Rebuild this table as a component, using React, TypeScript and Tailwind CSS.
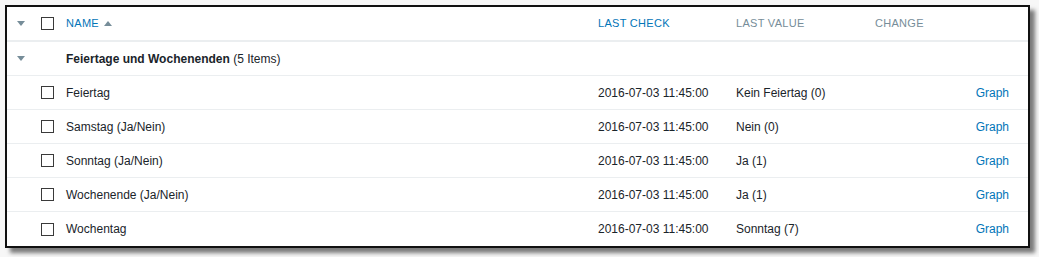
const rows = [
  { name: "Feiertag", value: "Kein Feiertag (0)" },
  { name: "Samstag (Ja/Nein)", value: "Nein (0)" },
  { name: "Sonntag (Ja/Nein)", value: "Ja (1)" },
  { name: "Wochenende (Ja/Nein)", value: "Ja (1)" },
  { name: "Wochentag", value: "Sonntag (7)" },
];

const grid = "grid grid-cols-[34px_25px_532px_138px_139px_1fr_auto] items-center";

function Caret({ up = false }: { up?: boolean }) {
  return (
    <svg width="8" height="5" viewBox="0 0 8 5" className="block">
      {up ? <path d="M0 5 L4 0 L8 5 Z" fill="#768d99" /> : <path d="M0 0 L8 0 L4 5 Z" fill="#768d99" />}
    </svg>
  );
}

function Box() {
  return <div className="w-[13px] h-[13px] border border-[#3a3a3a] bg-white" />;
}

export default function App() {
  return (
    <div className="w-[1039px] h-[257px] bg-[#f7f7f7] pt-[5px] pl-[5px] font-['Liberation_Sans',Arial,sans-serif] text-[12px] text-[#1a242a]">
      <div className="w-[1025px] h-[243px] bg-white border-2 border-[#111] shadow-[5px_5px_4px_rgba(0,0,0,0.5)]">
        {/* header */}
        <div className={`${grid} h-[35px] border-b-2 border-[#ebeef0] text-[11px] uppercase tracking-[0.3px]`}>
          <div className="pl-[10px]"><Caret /></div>
          <div><Box /></div>
          <div className="flex items-center gap-[5px] text-[#0275b8]">
            Name <Caret up />
          </div>
          <div className="text-[#0275b8]">Last check</div>
          <div className="text-[#768d99]">Last value</div>
          <div className="text-[#768d99]">Change</div>
          <div className="pr-[19px]" />
        </div>

        {/* group */}
        <div className={`${grid} h-[34px] border-b border-[#ebeef0]`}>
          <div className="pl-[10px]"><Caret /></div>
          <div />
          <div className="col-span-5">
            <span className="font-bold">Feiertage und Wochenenden</span> (5 Items)
          </div>
        </div>

        {rows.map((r, i) => (
          <div
            key={r.name}
            className={`${grid} h-[34px] ${i < rows.length - 1 ? "border-b border-[#ebeef0]" : ""}`}
          >
            <div />
            <div><Box /></div>
            <div>{r.name}</div>
            <div>2016-07-03 11:45:00</div>
            <div>{r.value}</div>
            <div />
            <div className="pr-[19px] text-[#0275b8]">Graph</div>
          </div>
        ))}
      </div>
    </div>
  );
}
